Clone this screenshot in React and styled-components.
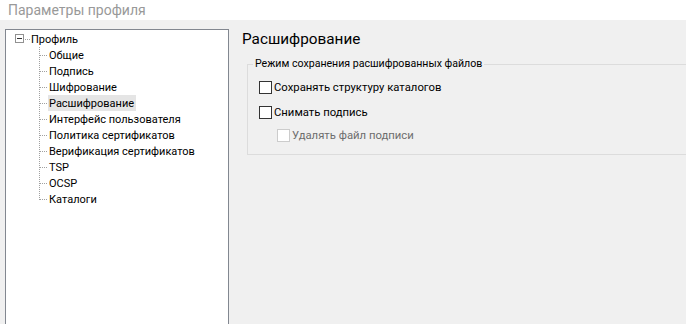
import React from "react";
import styled, { createGlobalStyle } from "styled-components";

const Global = createGlobalStyle`
  html, body { margin: 0; padding: 0; }
  body {
    width: 686px;
    height: 324px;
    overflow: hidden;
    background: #f0f0f0;
    font-family: Roboto, "Noto Sans", sans-serif;
    font-size: 11px;
    color: #000;
  }
`;

const Window = styled.div`
  width: 686px;
  height: 324px;
  display: flex;
  flex-direction: column;
  overflow: hidden;
`;

const TitleBar = styled.div`
  height: 20px;
  flex: none;
  background: #fff;
  color: #999;
  font-size: 14px;
  line-height: 20px;
  padding-left: 8px;
`;

const Body = styled.div`
  flex: 1;
  display: flex;
  padding: 9px 0 0 5px;
  min-height: 0;
`;

const TreePanel = styled.div`
  width: 222px;
  flex: none;
  background: #fff;
  border: 1px solid #828790;
  border-bottom: none;
  padding-top: 1px;
  margin-bottom: -20px;
`;

const TreeRow = styled.div`
  display: flex;
  align-items: center;
  height: 16px;
`;

const Label = styled.span`
  font-size: 11px;
  line-height: 17px;
  height: 16px;
  padding: 0 2px 0 1px;
  white-space: nowrap;
  background: ${(p) => (p.$selected ? "#e5e5e5" : "transparent")};
`;

const Content = styled.div`
  flex: 1;
  display: flex;
  flex-direction: column;
  padding-left: 13px;
  min-width: 0;
`;

const Heading = styled.div`
  font-size: 15.3px;
  line-height: 20px;
  white-space: nowrap;
`;

const Group = styled.fieldset`
  margin: 7px -20px 0 5px;
  padding: 9px 0 12px 11px;
  border: 1px solid #dcdcdc;
  display: flex;
  flex-direction: column;
  gap: 12px;
  min-width: 0;
`;

const Legend = styled.legend`
  margin-left: -6px;
  padding: 0 2px;
  font-size: 10.6px;
  line-height: 16px;
  white-space: nowrap;
`;

const CheckRow = styled.label`
  display: flex;
  align-items: center;
  gap: 2px;
  height: 13px;
  margin-left: ${(p) => (p.$sub ? "18px" : "0")};
  margin-top: ${(p) => (p.$sub ? "-2px" : "0")};
  color: ${(p) => (p.$disabled ? "#6d6d6d" : "#000")};
  white-space: nowrap;
`;

const Box = styled.span`
  width: 11px;
  height: 11px;
  flex: none;
  background: #fff;
  border: 1px solid ${(p) => (p.$disabled ? "#cccccc" : "#333333")};
`;

const CheckText = styled.span`
  font-size: 11.3px;
  line-height: 13px;
`;

const dot = "#a0a0a0";

function RootConnector() {
  return (
    <svg width="24" height="16" style={{ display: "block", flex: "none" }}>
      <rect x="9.5" y="3.5" width="8" height="8" fill="#fff" stroke="#919191" />
      <line x1="11" y1="7.5" x2="16" y2="7.5" stroke="#333" />
      <line x1="19" y1="8.5" x2="24" y2="8.5" stroke={dot} strokeDasharray="1 1" />
    </svg>
  );
}

function ChildConnector({ last }) {
  return (
    <svg width="42" height="16" style={{ display: "block", flex: "none" }}>
      <line x1="33.5" y1="0" x2="33.5" y2={last ? 9 : 16} stroke={dot} strokeDasharray="1 1" />
      <line x1="34" y1="8.5" x2="42" y2="8.5" stroke={dot} strokeDasharray="1 1" />
    </svg>
  );
}

const items = [
  "Общие",
  "Подпись",
  "Шифрование",
  "Расшифрование",
  "Интерфейс пользователя",
  "Политика сертификатов",
  "Верификация сертификатов",
  "TSP",
  "OCSP",
  "Каталоги",
];

export default function App() {
  return (
    <>
      <Global />
      <Window>
        <TitleBar>Параметры профиля</TitleBar>
        <Body>
          <TreePanel>
            <TreeRow>
              <RootConnector />
              <Label>Профиль</Label>
            </TreeRow>
            {items.map((t, i) => (
              <TreeRow key={t}>
                <ChildConnector last={i === items.length - 1} />
                <Label $selected={t === "Расшифрование"}>{t}</Label>
              </TreeRow>
            ))}
          </TreePanel>
          <Content>
            <Heading>Расшифрование</Heading>
            <Group>
              <Legend>Режим сохранения расшифрованных файлов</Legend>
              <CheckRow>
                <Box />
                <CheckText>Сохранять структуру каталогов</CheckText>
              </CheckRow>
              <CheckRow>
                <Box />
                <CheckText>Снимать подпись</CheckText>
              </CheckRow>
              <CheckRow $sub $disabled>
                <Box $disabled />
                <CheckText>Удалять файл подписи</CheckText>
              </CheckRow>
            </Group>
          </Content>
        </Body>
      </Window>
    </>
  );
}
